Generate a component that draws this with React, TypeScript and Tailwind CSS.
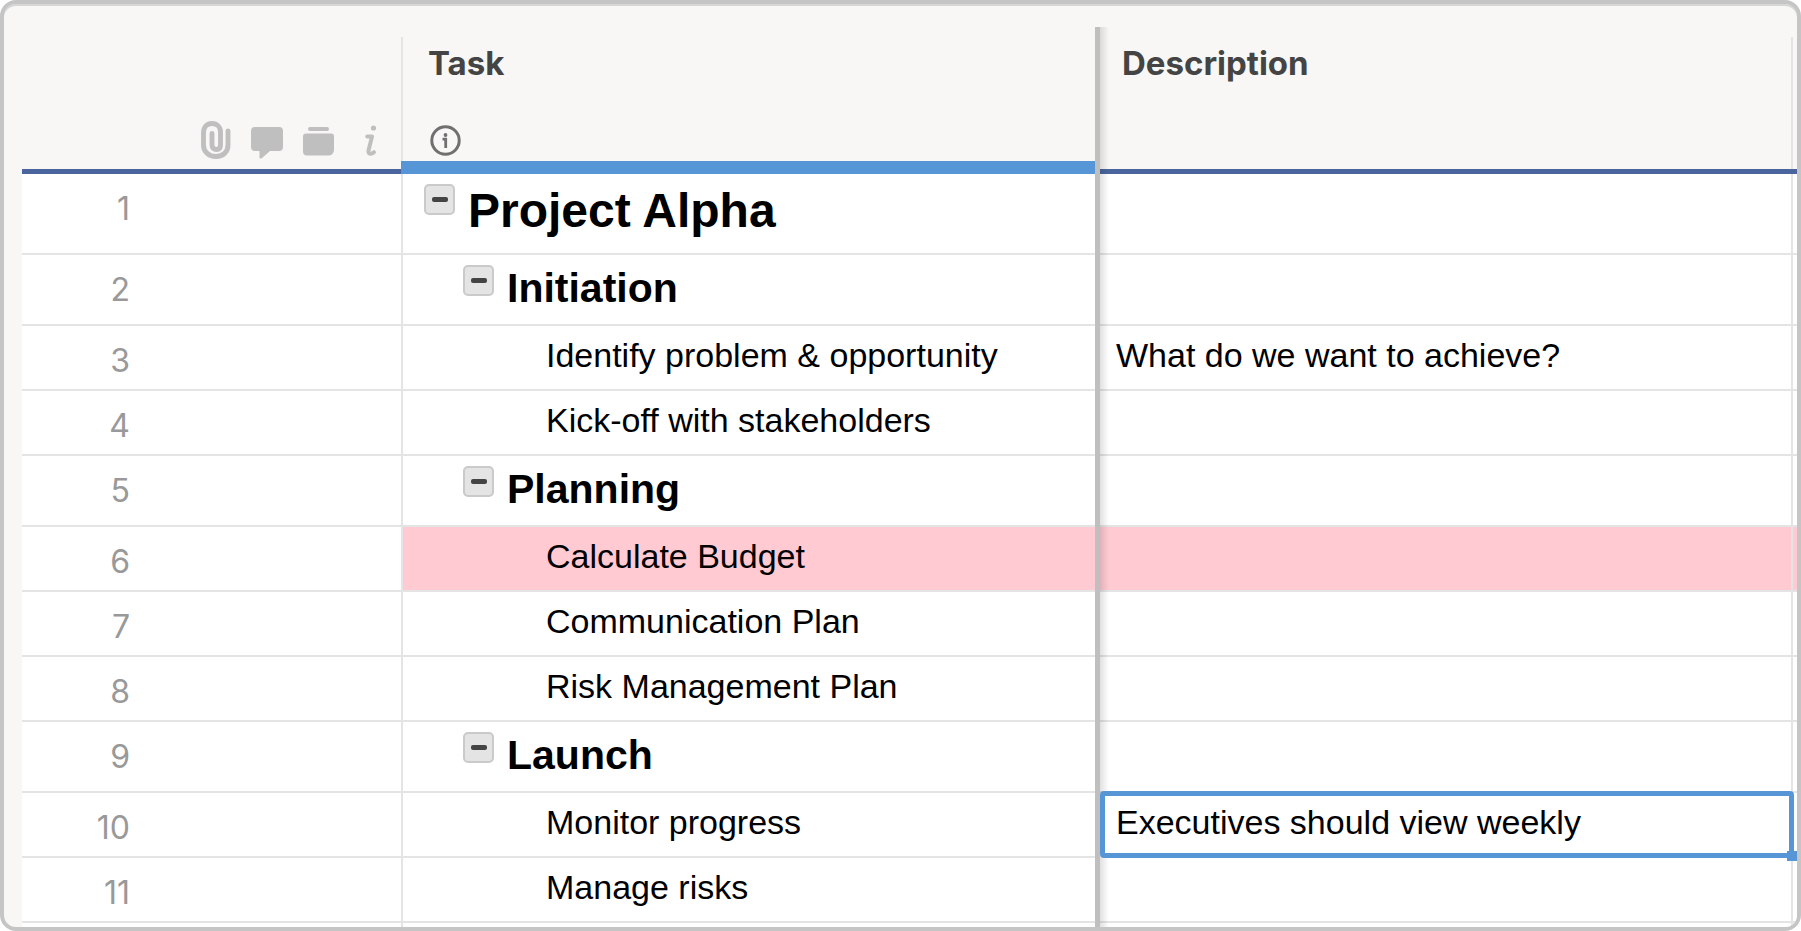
import React, { useState } from 'react';

type Row = {
  id: number;
  task: string;
  level: 0 | 1 | 2;
  description?: string;
  highlight?: boolean;
};

const rows: Row[] = [
  { id: 1, task: 'Project Alpha', level: 0 },
  { id: 2, task: 'Initiation', level: 1 },
  { id: 3, task: 'Identify problem & opportunity', level: 2, description: 'What do we want to achieve?' },
  { id: 4, task: 'Kick-off with stakeholders', level: 2 },
  { id: 5, task: 'Planning', level: 1 },
  { id: 6, task: 'Calculate Budget', level: 2, highlight: true },
  { id: 7, task: 'Communication Plan', level: 2 },
  { id: 8, task: 'Risk Management Plan', level: 2 },
  { id: 9, task: 'Launch', level: 1 },
  { id: 10, task: 'Monitor progress', level: 2, description: 'Executives should view weekly' },
  { id: 11, task: 'Manage risks', level: 2 },
];

const rowHeight = ['h-[81px]', 'h-[71px]', 'h-[65px]'];
const indent = ['pl-[21px]', 'pl-[60px]', 'pl-[143px]'];
const taskText = [
  'text-[48px] leading-[56px] font-bold',
  'text-[41px] leading-[48px] font-bold',
  'text-[34px] leading-[40px]',
];

const PaperclipIcon = () => (
  <svg width="30" height="38" viewBox="0 0 30 38" fill="none" stroke="currentColor" strokeLinecap="round" aria-hidden="true">
    <path
      d="M27 10v14c0 7-5 11.5-12 11.5S2.500 31 2.500 24V12C2.500 6 6 2.500 11 2.500S19.500 6 19.500 11v13c0 3-1.500 4.500-4 4.500S11 27 11 24V12.500"
      strokeWidth="4.900"
    />
  </svg>
);

const CommentIcon = () => (
  <svg width="32" height="32" viewBox="0 0 32 32" fill="currentColor" aria-hidden="true">
    <path d="M4 0h24a4 4 0 0 1 4 4v16a4 4 0 0 1-4 4h-9l-8 7c-1.500 1.200-2.500.500-2.500-1v-6H4a4 4 0 0 1-4-4V4a4 4 0 0 1 4-4z" />
  </svg>
);

const ProofIcon = () => (
  <svg width="31" height="29" viewBox="0 0 31 29" fill="currentColor" aria-hidden="true">
    <rect x="5" y="0" width="21" height="4" rx="2" />
    <path d="M3 6.500h25a3 3 0 0 1 3 3V23a5.500 5.500 0 0 1-5.500 5.500H4A4 4 0 0 1 0 24.500v-15a3 3 0 0 1 3-3z" />
  </svg>
);

const RowInfoIcon = () => (
  <svg width="12" height="32" viewBox="0 0 12 32" fill="none" stroke="currentColor" strokeLinecap="round" strokeLinejoin="round" aria-hidden="true">
    <circle cx="8.500" cy="3" r="2.600" fill="currentColor" stroke="none" />
    <path d="M2.200 11.500H7L3.500 25.500c-.500 2.500.500 3.300 2 3.200s2.300-.500 3.500-1.500" strokeWidth="4" />
  </svg>
);

const ColumnInfoIcon = () => (
  <svg width="31" height="31" viewBox="0 0 31 31" fill="none" stroke="currentColor" aria-hidden="true">
    <circle cx="15.500" cy="15.500" r="13.700" strokeWidth="3" />
    <circle cx="15.500" cy="10" r="1.900" fill="currentColor" stroke="none" />
    <path d="M12.500 14.200h3.200V23" strokeWidth="2.800" />
  </svg>
);

const FreezeShadow = () => (
  <span className="pointer-events-none absolute inset-y-0 left-full w-[9px] bg-linear-to-r from-black/12 to-transparent" />
);

const App: React.FC = () => {
  const [collapsed, setCollapsed] = useState<number[]>([]);
  const [selected, setSelected] = useState(10);

  const toggle = (id: number) =>
    setCollapsed((prev) => (prev.includes(id) ? prev.filter((x) => x !== id) : [...prev, id]));

  // a row is hidden while any of its parents is collapsed
  const isHidden = (index: number) => {
    let level = rows[index].level;
    for (let i = index - 1; i >= 0; i--) {
      if (rows[i].level < level) {
        if (collapsed.includes(rows[i].id)) return true;
        level = rows[i].level;
      }
    }
    return false;
  };

  const visible = rows.filter((_, i) => !isHidden(i));

  return (
    <div className="h-screen overflow-hidden rounded-[16px] border-4 border-[#c5c5c5] bg-[#f8f7f5] pt-[23px] pl-[18px] shadow-[inset_0_2px_0_#d6d6d5]">
      <table className="w-full table-fixed border-separate border-spacing-0 text-left font-['Liberation_Sans',Arial,sans-serif] text-black">
        <colgroup>
          <col className="w-[379px]" />
          <col className="w-[694px]" />
          <col className="w-[5px]" />
          <col />
          <col className="w-[6px]" />
        </colgroup>
        <thead className="font-['Inter',sans-serif] text-[#444444]">
          <tr className="h-[147px]">
            <th className="border-b-[5px] border-[#4a659e] p-0 align-bottom">
              <div className="flex items-end justify-end gap-[20px] pr-[24px] pb-[10px] text-[#bfbfbf]">
                <button type="button" aria-label="Attachments"><PaperclipIcon /></button>
                <button type="button" aria-label="Comments"><CommentIcon /></button>
                <button type="button" aria-label="Proofs" className="pb-[3px]"><ProofIcon /></button>
                <button type="button" aria-label="Row info" className="pb-[2px] pl-[11px]"><RowInfoIcon /></button>
              </div>
            </th>
            <th scope="col" className="border-b-[13px] border-[#5696d6] p-0 pt-[10px] align-top">
              <div className="flex h-[124px] flex-col items-start justify-between border-l-2 border-[#e4e4e4] pt-[6px] pb-[5px]">
                <span className="pl-[25px] text-[33px] leading-[40px] font-bold">Task</span>
                <button type="button" aria-label="Column info" className="pl-[27px] text-[#707070]"><ColumnInfoIcon /></button>
              </div>
            </th>
            <td aria-hidden="true" className="relative z-10 bg-[#bfbfbf] p-0">
              <FreezeShadow />
            </td>
            <th scope="col" className="border-b-[5px] border-[#4a659e] p-0 pt-4 pl-[22px] align-top text-[33px] leading-[40px] font-bold">
              Description
            </th>
            <td className="border-b-[5px] border-[#4a659e] p-0 pt-[10px]">
              <div className="h-[132px] border-l-2 border-[#e4e4e4]" />
            </td>
          </tr>
        </thead>
        <tbody className="bg-white">
          {visible.map((row, index) => (
            <tr key={row.id} className={rowHeight[row.level]}>
              <th scope="row" className="border-b-2 border-[#e4e4e4] p-0 pt-[15px] pr-[271px] text-right align-top font-['Inter',sans-serif] text-[32px] leading-[40px] font-normal text-[#999999]">
                {row.id}
              </th>
              <td className={`border-b-2 border-l-2 border-[#e4e4e4] p-0 align-top ${row.highlight ? 'bg-[#ffcad2]' : ''}`}>
                <div className={`flex items-start gap-[13px] pt-[9px] ${indent[row.level]}`}>
                  {row.level < 2 && (
                    <button
                      type="button"
                      aria-label={`Toggle ${row.task}`}
                      aria-expanded={!collapsed.includes(row.id)}
                      onClick={() => toggle(row.id)}
                      className="mt-px flex size-[31px] shrink-0 items-center justify-center rounded-[5px] border-2 border-[#cacaca] bg-[#e4e4e4]"
                    >
                      <span className="h-[5px] w-4 rounded-[2px] bg-[#444444]" />
                    </button>
                  )}
                  <span className={`whitespace-nowrap ${taskText[row.level]}`}>{row.task}</span>
                </div>
              </td>
              {index === 0 && (
                <td rowSpan={visible.length + 1} aria-hidden="true" className="relative z-10 bg-[#bfbfbf] p-0">
                  <FreezeShadow />
                </td>
              )}
              <td
                onClick={() => setSelected(row.id)}
                className={`relative border-b-2 border-[#e4e4e4] p-0 pt-[9px] pl-4 align-top text-[34px] leading-[40px] whitespace-nowrap ${row.highlight ? 'bg-[#ffcad2]' : ''} ${selected === row.id ? 'z-20 bg-white' : ''}`}
              >
                {row.description}
                {selected === row.id && (
                  <>
                    <span className="pointer-events-none absolute -top-[2px] right-[-3px] -bottom-[2px] left-0 rounded-[4px] border-[5px] border-[#5696d6]" />
                    <span className="absolute right-[-6px] -bottom-[5px] size-[10px] bg-[#5696d6]" />
                  </>
                )}
              </td>
              <td className={`border-b-2 border-l-2 border-[#e4e4e4] p-0 ${row.highlight ? 'bg-[#ffcad2]' : ''}`} />
            </tr>
          ))}
          <tr className="h-[65px]">
            <td className="p-0" />
            <td className="border-l-2 border-[#e4e4e4] p-0" />
            <td className="p-0" />
            <td className="border-l-2 border-[#e4e4e4] p-0" />
          </tr>
        </tbody>
      </table>
    </div>
  );
};

export default App;
